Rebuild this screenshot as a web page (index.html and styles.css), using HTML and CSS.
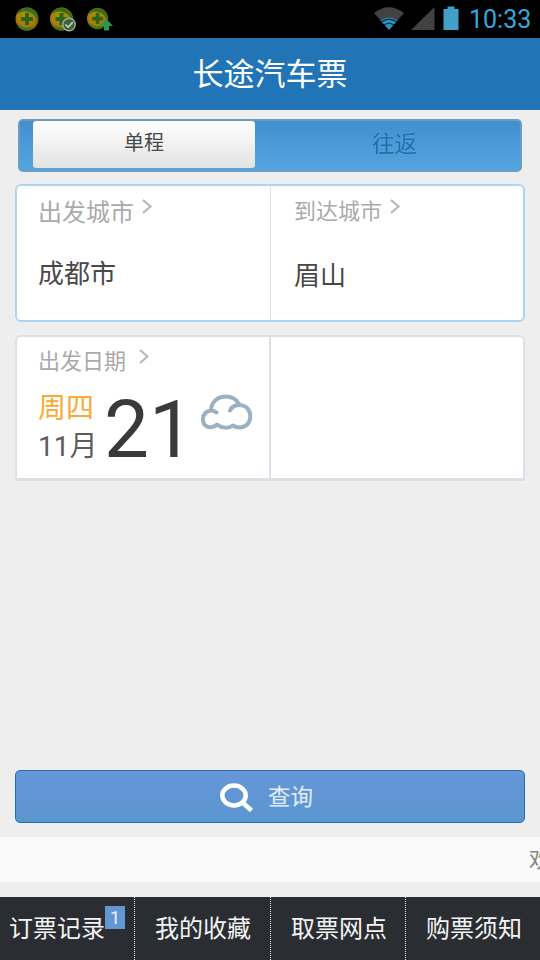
FILE: index.html
```html
<!DOCTYPE html>
<html lang="zh-CN">
<head>
<meta charset="utf-8">
<title>长途汽车票</title>
<link rel="stylesheet" href="styles.css">
</head>
<body>
<div class="status">
  <svg class="guards" width="120" height="38" viewBox="0 0 120 38">
    <defs>
      <radialGradient id="ball" cx="45%" cy="40%" r="65%">
        <stop offset="0" stop-color="#a69a12"/><stop offset=".6" stop-color="#a87b0b"/><stop offset="1" stop-color="#80620c"/>
      </radialGradient>
      <g id="guard">
        <circle cx="11.500" cy="11.500" r="11.500" fill="url(#ball)"/>
        <path d="M4 3Q12-3 19 3Q24 8 22 14Q19 5 11 4Q6 3 2 7Z" fill="#386f17"/>
        <path d="M1 15Q6 21 14 20Q18 20 20 19Q14 25 7 22Q2 20 1 15Z" fill="#43761b"/>
        <path d="M9.500 5.500h4v4h4v4h-4v4h-4v-4h-4v-4h4Z" fill="#2d6415"/>
      </g>
    </defs>
    <use href="#guard" x="15.500" y="7.500"/>
    <use href="#guard" x="50" y="7.500"/>
    <use href="#guard" transform="translate(87 8) scale(.92)"/>
    <circle cx="69" cy="24.500" r="6.200" fill="#3e6233" stroke="#a3aaa0" stroke-width="1.400"/>
    <path d="M65.500 24.500l2.700 2.700 4.500-5" fill="none" stroke="#d0d4ce" stroke-width="1.600"/>
    <path d="M106.500 19l6.500 7h-4v4.500h-5V26h-4Z" fill="#28984d"/>
  </svg>
  <div class="system">
    <svg width="86" height="38" viewBox="374 0 86 38">
      <path d="M374 13Q389 1.500 404 13L389 30Z" fill="#424242"/>
      <path d="M380.500 20.500Q389 14.500 397.500 20.500L389 30Z" fill="#2d91bd"/>
      <path d="M381.500 21.800Q389 16.500 396.500 21.800M384 25Q389 21.500 394 25" fill="none" stroke="#0c2833" stroke-width="1.200"/>
      <path d="M411 30L434.500 7v23Z" fill="#424242"/>
      <path d="M443.500 9h4V6.500h7V9h4v21h-15Z" fill="#429fc7"/>
    </svg>
    <span class="clock">10:33</span>
  </div>
</div>
<header class="title">长途汽车票</header>
<main class="content">
  <div class="tabs">
    <div class="tab tab-on">单程</div>
    <div class="tab tab-off">往返</div>
  </div>
  <section class="card cities">
    <div class="cell">
      <div class="label label-large">出发城市<svg class="chev" width="10" height="15" viewBox="0 0 10 15"><path d="M1 1l7.500 6.500L1 14"/></svg></div>
      <div class="city">成都市</div>
    </div>
    <div class="cell cell-right">
      <div class="label">到达城市<svg class="chev" width="10" height="15" viewBox="0 0 10 15"><path d="M1 1l7.500 6.500L1 14"/></svg></div>
      <div class="city city-to">眉山</div>
    </div>
  </section>
  <section class="card dates">
    <div class="cell">
      <div class="label label-date">出发日期<svg class="chev" width="10" height="15" viewBox="0 0 10 15"><path d="M1 1l7.500 6.500L1 14"/></svg></div>
      <div class="date">
        <div class="when"><div class="week">周四</div><div class="month">11月</div></div>
        <div class="day">21</div>
        <svg class="cloud" width="52" height="38" viewBox="200 393 52 38"><path d="M216.500 412.500Q213 409.500 209 411C201.500 413 201.500 423.500 206.500 426.200C210 428.200 214.500 427 217 424.500C222 428.500 229 428.500 233 425.500C238 429 245 427.500 248 423.500C252 418 250.500 409.500 245 406.500C239.500 403.500 232.500 405 230 410.500M211 409.500C212 401 218.500 396.500 225.500 396.500C231.500 396.500 236.500 399.500 239 404"/></svg>
      </div>
    </div>
    <div class="cell cell-right"></div>
  </section>
  <div class="search">
    <svg width="34" height="30" viewBox="0 0 34 30"><ellipse cx="14" cy="12.500" rx="11.700" ry="9.900"/><path d="M22 19l9.500 8.500"/></svg>
    <span>查询</span>
  </div>
</main>
<div class="ticker"><span>欢迎</span></div>
<nav class="nav">
  <div class="item item-first"><span>订票记录</span><b class="badge">1</b></div>
  <div class="item">我的收藏</div>
  <div class="item">取票网点</div>
  <div class="item">购票须知</div>
</nav>
</body>
</html>
```
FILE: styles.css
```css
* { box-sizing: border-box; }
body {
  margin: 0;
  width: 540px;
  height: 960px;
  overflow: hidden;
  display: flex;
  flex-direction: column;
  background: #eee;
  font-family: Roboto, "Noto Sans CJK SC", sans-serif;
  color: #484848;
}
svg { display: block; flex: none; }
.status {
  height: 38px;
  display: flex;
  justify-content: space-between;
  background: #000;
}
.system { display: flex; }
.clock {
  width: 80px;
  padding-left: 9px;
  color: #31a9dc;
  font-size: 25px;
  line-height: 39px;
}
.title {
  height: 72px;
  background: #2175b6;
  color: #fff;
  font-size: 31px;
  line-height: 73px;
  text-align: center;
}
.content {
  height: 727px;
  padding: 9px 15px 0;
  display: flex;
  flex-direction: column;
}
.tabs {
  height: 53px;
  margin: 0 3px 12px;
  padding: 0 0 2px 13px;
  border: 2px solid #6b9dc5;
  border-radius: 5px;
  display: flex;
  background: linear-gradient(#438ecf, #54a5df);
}
.tab { text-align: center; }
.tab-on {
  width: 222px;
  height: 47px;
  border-radius: 3px;
  background: linear-gradient(#fff, #e2e2e2);
  font-size: 20px;
  line-height: 44px;
}
.tab-off {
  flex: 1;
  padding-right: 14px;
  margin-left: 28px;
  color: #216fac;
  font-size: 22.5px;
  line-height: 46px;
  text-shadow: 0 0 2px #62ade3;
}
.card {
  display: grid;
  grid-template-columns: 253px 1fr;
  background: #fff;
  border-radius: 6px;
}
.cities {
  height: 138px;
  margin-bottom: 13px;
  border: 2px solid #add5f1;
}
.cities .cell-right { border-left: 1px solid #dbe1e8; }
.dates {
  grid-template-columns: 252px 1fr;
  height: 146px;
  border: 2px solid #dbe1e6;
  border-bottom-width: 3px;
  border-radius: 6px 6px 0 0;
}
.dates .cell-right { border-left: 2px solid #dbe1e6; }
.cell { padding-left: 21px; }
.cities .cell-right { padding-left: 23px; }
.label {
  height: 46px;
  display: flex;
  align-items: center;
  color: #aaa;
  font-size: 22px;
}
.chev {
  margin: -5px 0 0 8px;
  fill: none;
  stroke: #b4b4b4;
  stroke-width: 2;
}
.label-large { font-size: 24px; height: 48px; }
.label-large .chev { margin-top: -7px; }
.label-date { height: 43px; font-size: 22px; }
.label-date .chev { margin-left: 13px; }
.city {
  height: 80px;
  line-height: 80px;
  font-size: 26px;
}
.city-to { line-height: 88px; }
.date { display: flex; }
.when { width: 66px; }
.week {
  height: 38px;
  line-height: 58px;
  font-size: 28px;
  color: #f9aa31;
}
.month {
  height: 38px;
  line-height: 58px;
  font-size: 28px;
  color: #5c5c5c;
}
.day {
  width: 96px;
  height: 96px;
  line-height: 100px;
  font-size: 80px;
  color: #3a3a3a;
}
.cloud {
  margin-top: 13px;
  fill: none;
  stroke: #9bb0c0;
  stroke-width: 4;
  stroke-linecap: round;
  stroke-linejoin: round;
}
.search {
  height: 53px;
  margin: auto 0 14px;
  border: 1px solid #216fae;
  border-radius: 5px;
  display: flex;
  align-items: center;
  padding-left: 204px;
  gap: 14px;
  background: linear-gradient(#6696d8, #5a96ce);
  color: #e2effb;
  font-size: 22.5px;
  line-height: 50px;
}
.search svg {
  fill: none;
  stroke: #fff;
  stroke-width: 4.5;
  margin-top: 2px;
}
.ticker {
  height: 45px;
  margin-bottom: 15px;
  padding-left: 529px;
  overflow: hidden;
  white-space: nowrap;
  background: #fafafa;
  color: #858585;
  font-size: 22px;
  line-height: 46px;
}
.nav {
  height: 63px;
  display: grid;
  grid-template-columns: 135px 136px 135px 134px;
  background: #2a2d32;
  color: #f4f4f4;
}
.item {
  padding-left: 20px;
  border-right: 1px dotted #e5e5e5;
  font-size: 24px;
  line-height: 65px;
  white-space: nowrap;
}
.item:last-child { border-right: 0; }
.item-first { display: flex; padding-left: 9px; }
.badge {
  width: 20px;
  height: 23px;
  margin-top: 9px;
  background: #6297d3;
  color: #eef5fc;
  font-size: 18px;
  font-weight: 400;
  line-height: 24px;
  text-align: center;
}
```
